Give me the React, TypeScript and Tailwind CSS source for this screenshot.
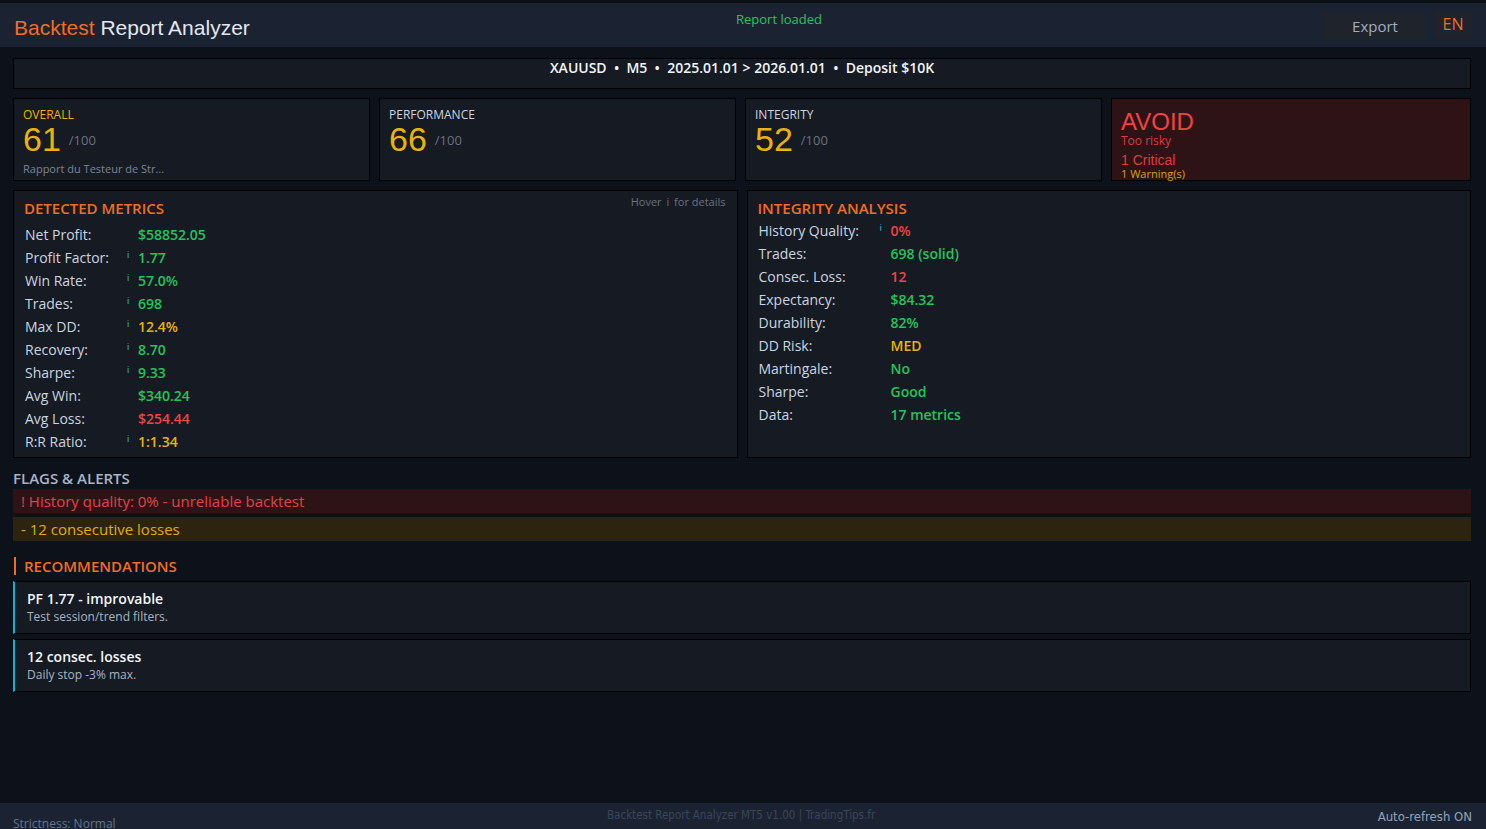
import React from 'react';

const SCORES = [
  { label: 'OVERALL', value: 61, note: 'Rapport du Testeur de Str...', labelColor: 'text-[#eab308]' },
  { label: 'PERFORMANCE', value: 66, note: '', labelColor: 'text-[#cbd5e1]' },
  { label: 'INTEGRITY', value: 52, note: '', labelColor: 'text-[#cbd5e1]' },
];

const METRICS = [
  { label: 'Net Profit:', value: '$58852.05', color: 'text-[#22c55e]', info: false },
  { label: 'Profit Factor:', value: '1.77', color: 'text-[#22c55e]', info: true },
  { label: 'Win Rate:', value: '57.0%', color: 'text-[#22c55e]', info: true },
  { label: 'Trades:', value: '698', color: 'text-[#22c55e]', info: true },
  { label: 'Max DD:', value: '12.4%', color: 'text-[#eab308]', info: true },
  { label: 'Recovery:', value: '8.70', color: 'text-[#22c55e]', info: true },
  { label: 'Sharpe:', value: '9.33', color: 'text-[#22c55e]', info: true },
  { label: 'Avg Win:', value: '$340.24', color: 'text-[#22c55e]', info: false },
  { label: 'Avg Loss:', value: '$254.44', color: 'text-[#ef4444]', info: false },
  { label: 'R:R Ratio:', value: '1:1.34', color: 'text-[#eab308]', info: true },
];

const INTEGRITY = [
  { label: 'History Quality:', value: '0%', color: 'text-[#ef4444]', info: true },
  { label: 'Trades:', value: '698 (solid)', color: 'text-[#22c55e]', info: false },
  { label: 'Consec. Loss:', value: '12', color: 'text-[#ef4444]', info: false },
  { label: 'Expectancy:', value: '$84.32', color: 'text-[#22c55e]', info: false },
  { label: 'Durability:', value: '82%', color: 'text-[#22c55e]', info: false },
  { label: 'DD Risk:', value: 'MED', color: 'text-[#eab308]', info: false },
  { label: 'Martingale:', value: 'No', color: 'text-[#22c55e]', info: false },
  { label: 'Sharpe:', value: 'Good', color: 'text-[#22c55e]', info: false },
  { label: 'Data:', value: '17 metrics', color: 'text-[#22c55e]', info: false },
];

const RECS = [
  { title: 'PF 1.77 - improvable', desc: 'Test session/trend filters.' },
  { title: '12 consec. losses', desc: 'Daily stop -3% max.' },
];

function Row({ label, value, color, info, labelW }: { label: string; value: string; color: string; info: boolean; labelW: string }) {
  return (
    <div className="flex items-center h-[23px]">
      <span className={`${labelW} text-[#cbd5e1] shrink-0`}>{label}</span>
      <span className="w-[11px] text-[9px] text-[#38bdf8] self-start pt-[2px] shrink-0">{info ? 'i' : ''}</span>
      <span className={`${color} font-semibold`}>{value}</span>
    </div>
  );
}

export default function App() {
  return (
    <div
      className="h-[829px] w-full bg-[#0d111a] flex flex-col overflow-hidden text-[14px] text-[#cbd5e1]"
      style={{ fontFamily: '"Open Sans", "Noto Sans", sans-serif' }}
    >
      <div className="h-[3px] bg-[#0d1017] shrink-0" />
      <header className="h-[44px] bg-[#1b2333] flex items-center px-[14px] relative shrink-0">
        <h1 className="text-[21px] mt-[6px]" style={{ fontFamily: '"Liberation Sans", Arial, sans-serif' }}>
          <span className="text-[#f26d21]">Backtest</span> <span className="text-[#e2e8f0]">Report Analyzer</span>
        </h1>
        <div className="absolute left-[736px] top-[7px] text-[13px] text-[#22c55e]">Report loaded</div>
        <div className="ml-auto flex items-center gap-[8px] mt-[2px]">
          <button className="w-[104px] h-[27px] bg-[#1e232c] text-[#a0aec0] text-[15px] flex items-center justify-center pl-[2px]">Export</button>
          <button className="w-[38px] h-[27px] bg-[#1e232c] text-[#f26d21] text-[16px] flex items-center justify-center -mt-[4px]">EN</button>
        </div>
      </header>

      <main className="flex-1 pl-[13px] pr-[15px] pt-[11px] flex flex-col">
        <div className="h-[31px] bg-[#161a22] border border-black flex items-center justify-center font-semibold text-[#f1f5f9] text-[14px] pb-[12px]">
          XAUUSD&nbsp; •&nbsp; M5&nbsp; •&nbsp; 2025.01.01 &gt; 2026.01.01&nbsp; •&nbsp; Deposit $10K
        </div>

        <div className="grid grid-cols-[357px_357px_357px_1fr] gap-[9px] mt-[9px] h-[82px]">
          {SCORES.map(s => (
            <div key={s.label} className="bg-[#161a22] border border-black px-[9px] pt-[8px]">
              <div className={`text-[12px] leading-[15px] ${s.labelColor}`}>{s.label}</div>
              <div className="flex items-end gap-[8px] h-[34px]">
                <span className="text-[34px] leading-none text-[#eab308]" style={{ fontFamily: '"Liberation Sans", Arial, sans-serif' }}>{s.value}</span>
                <span className="text-[13px] text-[#6b7280] pb-[6px]">/100</span>
              </div>
              {s.note && <div className="text-[11px] leading-[14px] text-[#7c8594] mt-[6px]">{s.note}</div>}
            </div>
          ))}
          <div className="bg-[#2e1316] border border-black px-[9px] pt-[11px] text-[#ef4444]" style={{ fontFamily: '"Liberation Sans", Arial, sans-serif' }}>
            <div className="text-[24px] leading-[24px]">AVOID</div>
            <div className="text-[12px] leading-[14px] text-[#dc3c44]" style={{ fontFamily: '"Open Sans", sans-serif' }}>Too risky</div>
            <div className="text-[14px] leading-[16px] mt-[4px] text-[#dc3c44]">1 Critical</div>
            <div className="text-[11px] leading-[12px] text-[#d4a60a]" style={{ fontFamily: '"Open Sans", sans-serif' }}>1 Warning(s)</div>
          </div>
        </div>

        <div className="grid grid-cols-2 gap-[9px] mt-[10px] h-[268px]">
          <section className="bg-[#161a22] border border-black pl-[10px] pt-[7px] relative">
            <h2 className="text-[15px] font-semibold text-[#f26d21] leading-[20px]">DETECTED METRICS</h2>
            <div className="absolute right-[11px] top-[3px] text-[11px] text-[#6b7280]">Hover <span className="mx-[2px]">i</span> for details</div>
            <div className="mt-[5px] pl-[1px]">
              {METRICS.map(m => <Row key={m.label} {...m} labelW="w-[102px]" />)}
            </div>
          </section>
          <section className="bg-[#161a22] border border-black pl-[10px] pt-[7px]">
            <h2 className="text-[15px] font-semibold text-[#f26d21] leading-[20px]">INTEGRITY ANALYSIS</h2>
            <div className="mt-[1px] pl-[1px]">
              {INTEGRITY.map(m => <Row key={m.label} {...m} labelW="w-[121px]" />)}
            </div>
          </section>
        </div>

        <h3 className="mt-[10px] text-[15px] font-semibold text-[#aab4c3] leading-[20px]">FLAGS &amp; ALERTS</h3>
        <div className="mt-[1px] h-[24px] bg-[#2e1316] text-[#e0434a] text-[15px] flex items-center px-[8px]">! History quality: 0% - unreliable backtest</div>
        <div className="mt-[4px] h-[24px] bg-[#2d2410] text-[#e0ac0c] text-[15px] flex items-center px-[8px]">- 12 consecutive losses</div>

        <div className="mt-[16px] flex items-center h-[18px]">
          <div className="w-[2px] h-[18px] bg-[#f26d21] ml-[1px]" />
          <h3 className="ml-[8px] text-[15px] font-semibold text-[#f26d21]">RECOMMENDATIONS</h3>
        </div>
        <div className="mt-[6px] flex flex-col gap-[5px]">
          {RECS.map(r => (
            <div key={r.title} className="h-[53px] bg-[#161a22] border border-black border-l-2 border-l-[#06b6d4] pl-[12px] pt-[7px]">
              <div className="text-[14px] font-semibold text-[#f1f5f9] leading-[20px]">{r.title}</div>
              <div className="text-[12px] text-[#aab4c3] leading-[16px]">{r.desc}</div>
            </div>
          ))}
        </div>
      </main>

      <footer className="h-[26px] bg-[#1b2333] flex items-end px-[13px] relative shrink-0 text-[12px]">
        <span className="text-[#64748b] leading-[14px] -mb-[2px]">Strictness: Normal</span>
        <span
          className="absolute left-[607px] top-[4px] text-[11.5px] text-[#3b4556]"
          style={{ fontFamily: '"Liberation Sans Narrow", "DejaVu Sans Condensed", sans-serif' }}
        >
          Backtest Report Analyzer MT5 v1.00 | TradingTips.fr
        </span>
        <span
          className="absolute right-[14px] top-[4px] text-[13px] text-[#94a3b8]"
          style={{ fontFamily: '"Liberation Sans Narrow", "DejaVu Sans Condensed", sans-serif' }}
        >
          Auto-refresh ON
        </span>
      </footer>
    </div>
  );
}
